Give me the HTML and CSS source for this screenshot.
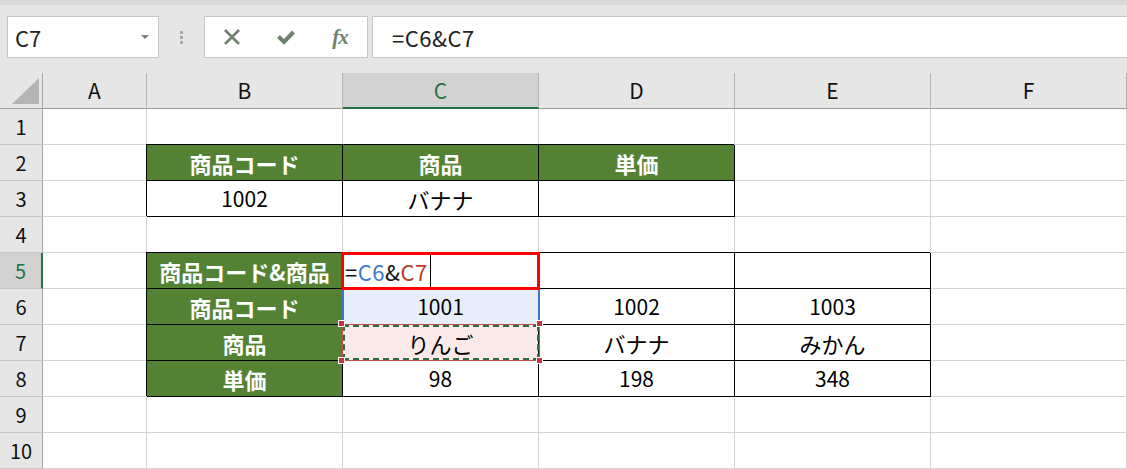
FILE: index.html
```html
<!DOCTYPE html>
<html lang="ja">
<head>
  <meta charset="UTF-8">
  <meta name="viewport" content="width=device-width, initial-scale=1.0">
  <title>Book1 - Excel</title>
  <link rel="stylesheet" href="styles.css">
</head>
<body>
  <div class="toolbar">
    <div class="namebox"><span>C7</span><i class="caret"></i></div>
    <div class="grip"><i></i><i></i><i></i></div>
    <div class="fxbtns">
      <div class="slot">
        <svg width="18" height="18" viewBox="0 0 18 18"><path d="M2 2 L16 16 M16 2 L2 16" stroke="#6f806f" stroke-width="2.6" fill="none"/></svg>
      </div>
      <div class="slot">
        <svg width="20" height="18" viewBox="0 0 20 18"><path d="M2.5 8.5 L8 14 L17.5 4" stroke="#6f806f" stroke-width="4" fill="none"/></svg>
      </div>
      <div class="slot fx">fx</div>
    </div>
    <div class="formula">=C6&amp;C7</div>
  </div>

  <div class="sheet">
    <!-- 列見出し -->
    <div class="c corner"><i></i></div>
    <div class="c colh">A</div>
    <div class="c colh">B</div>
    <div class="c colh sel">C</div>
    <div class="c colh">D</div>
    <div class="c colh">E</div>
    <div class="c colh">F</div>

    <!-- 1 -->
    <div class="c rowh">1</div>
    <div class="c"></div><div class="c"></div><div class="c"></div><div class="c"></div><div class="c"></div><div class="c"></div>

    <!-- 2 -->
    <div class="c rowh">2</div>
    <div class="c"></div>
    <div class="c bx hd">商品コード</div>
    <div class="c bx hd">商品</div>
    <div class="c bx hd">単価</div>
    <div class="c"></div><div class="c"></div>

    <!-- 3 -->
    <div class="c rowh">3</div>
    <div class="c"></div>
    <div class="c bx num">1002</div>
    <div class="c bx">バナナ</div>
    <div class="c bx"></div>
    <div class="c"></div><div class="c"></div>

    <!-- 4 -->
    <div class="c rowh">4</div>
    <div class="c"></div><div class="c"></div><div class="c"></div><div class="c"></div><div class="c"></div><div class="c"></div>

    <!-- 5 -->
    <div class="c rowh sel">5</div>
    <div class="c"></div>
    <div class="c bx hd">商品コード&amp;商品</div>
    <div class="c bx edit">=<span class="ref1">C6</span>&amp;<span class="ref2">C7</span><i class="cursor"></i><b class="active"></b></div>
    <div class="c bx"></div>
    <div class="c bx"></div>
    <div class="c"></div>

    <!-- 6 -->
    <div class="c rowh">6</div>
    <div class="c"></div>
    <div class="c bx hd">商品コード</div>
    <div class="c bx num blue">1001<b class="range1"></b></div>
    <div class="c bx num">1002</div>
    <div class="c bx num">1003</div>
    <div class="c"></div>

    <!-- 7 -->
    <div class="c rowh">7</div>
    <div class="c"></div>
    <div class="c bx hd">商品</div>
    <div class="c bx pink">りんご
      <b class="range2"><b class="ants"></b></b>
      <i class="hdl tl"></i><i class="hdl tr"></i><i class="hdl bl"></i><i class="hdl br"></i>
    </div>
    <div class="c bx">バナナ</div>
    <div class="c bx">みかん</div>
    <div class="c"></div>

    <!-- 8 -->
    <div class="c rowh">8</div>
    <div class="c"></div>
    <div class="c bx hd">単価</div>
    <div class="c bx num">98</div>
    <div class="c bx num">198</div>
    <div class="c bx num">348</div>
    <div class="c"></div>

    <!-- 9 -->
    <div class="c rowh">9</div>
    <div class="c"></div><div class="c"></div><div class="c"></div><div class="c"></div><div class="c"></div><div class="c"></div>

    <!-- 10 -->
    <div class="c rowh">10</div>
    <div class="c"></div><div class="c"></div><div class="c"></div><div class="c"></div><div class="c"></div><div class="c"></div>
  </div>
</body>
</html>
```

FILE: styles.css
```css
*{margin: 0; padding: 0; box-sizing: border-box;}

body{
  width: 1127px;
  height: 469px;
  overflow: hidden;
  background: #fff;
  font-family: "Noto Sans CJK JP", "Noto Sans", sans-serif;
  color: #000;
}

/* 数式バー */
.toolbar{
  height: 73px;
  display: flex;
  align-items: flex-start;
  padding-top: 16px;
  background: linear-gradient(#d8d8d8 0, #dcdcdc 5px, #e6e6e6 5px);
}

.namebox{
  margin-left: 7px;
  width: 152px;
  height: 42px;
  background: #fff;
  border: 1px solid #c6c6c6;
  display: flex;
  align-items: center;
  padding-left: 7px;
  font-size: 22px;
  color: #222;
}

.caret{
  margin-left: auto;
  margin-right: 9px;
  border-left: 4px solid transparent;
  border-right: 4px solid transparent;
  border-top: 4px solid #7c7c7c;
}

.grip{
  width: 45px;
  height: 42px;
  display: flex;
  flex-direction: column;
  align-items: center;
  justify-content: center;
  gap: 2px;
}

.grip i{
  width: 3px;
  height: 3px;
  background: #a8a8a8;
}

.fxbtns{
  width: 164px;
  height: 42px;
  background: #fff;
  border: 1px solid #c6c6c6;
  display: flex;
  align-items: center;
}

.slot{
  width: 54px;
  display: flex;
  justify-content: center;
  align-items: center;
}

.fx{
  font-family: "Liberation Serif", serif;
  font-style: italic;
  font-weight: bold;
  font-size: 21px;
  color: #6f806f;
  letter-spacing: -1px;
}

.formula{
  flex: 1;
  margin-left: 4px;
  height: 42px;
  background: #fff;
  border: 1px solid #c6c6c6;
  border-right: none;
  display: flex;
  align-items: center;
  padding-left: 19px;
  font-size: 22px;
  letter-spacing: 0.5px;
  color: #222;
}

/* シート */
.sheet{
  display: grid;
  grid-template-columns: 43px 104px repeat(5, 196px);
  grid-auto-rows: 36px;
}

.c{
  border-right: 1px solid #d4d4d4;
  border-bottom: 1px solid #d4d4d4;
  display: flex;
  align-items: center;
  justify-content: center;
  font-size: 22px;
  line-height: 1;
  position: relative;
}

.num{ font-size: 21px; }

.corner{
  background: #e6e6e6;
  border-right: 1px solid #a6a6a6;
  border-bottom: 1px solid #9c9c9c;
  align-items: flex-end;
  justify-content: flex-end;
  padding: 0 3px 4px 0;
}

.corner i{
  width: 27px;
  height: 26px;
  background: #b4b4b4;
  clip-path: polygon(100% 0, 100% 100%, 0 100%);
}

.colh{
  background: #e6e6e6;
  border-right: 1px solid #b4b4b4;
  border-bottom: 1px solid #9c9c9c;
  color: #111;
  font-size: 21px;
}

.colh.sel{
  background: #d2d2d2;
  border-bottom: 2px solid #217346;
  color: #217346;
  padding-top: 1px;
}

.rowh{
  background: #e6e6e6;
  border-right: 1px solid #a6a6a6;
  border-bottom: 1px solid #c8c8c8;
  color: #111;
  font-size: 20px;
}

.rowh.sel{
  background: #d2d2d2;
  border-right: 2px solid #217346;
  color: #217346;
}

/* 表の罫線 */
.bx{
  border-right-color: #000;
  border-bottom-color: #000;
  box-shadow: -1px -1px 0 #000;
}

.hd{
  background: #548235;
  color: #fff;
  font-weight: bold;
}

/* 編集中のセル */
.edit{
  justify-content: flex-start;
  padding-left: 2px;
  letter-spacing: 0.5px;
  color: #111;
}

.ref1{ color: #3a7cc9; }
.ref2{ color: #c0392b; }

.cursor{
  width: 1px;
  height: 32px;
  background: #000;
  margin-left: 2px;
}

.active{
  position: absolute;
  top: -1px;
  left: -2px;
  right: -2px;
  bottom: -2px;
  border: 3px solid #ff0000;
  z-index: 3;
}

.blue{ background: #e8eef9; }

.range1{
  position: absolute;
  top: -1px;
  left: -1px;
  right: -2px;
  bottom: 0;
  border: 2px solid #3b78c9;
  border-bottom: none;
  z-index: 1;
}

.pink{ background: #fae9e9; }

.range2{
  position: absolute;
  top: -1px;
  left: -1px;
  right: -2px;
  bottom: -1px;
  border: 1px solid #c0504d;
  z-index: 2;
}

.ants{
  position: absolute;
  inset: 0;
  border: 2px dashed #2c6e3f;
}

.hdl{
  position: absolute;
  width: 7px;
  height: 7px;
  background: #c4373b;
  border: 1px solid #fff;
  z-index: 2;
}

.tl{ top: -5px; left: -5px; }
.tr{ top: -5px; right: -5px; }
.bl{ bottom: -4px; left: -5px; }
.br{ bottom: -4px; right: -5px; }
```
